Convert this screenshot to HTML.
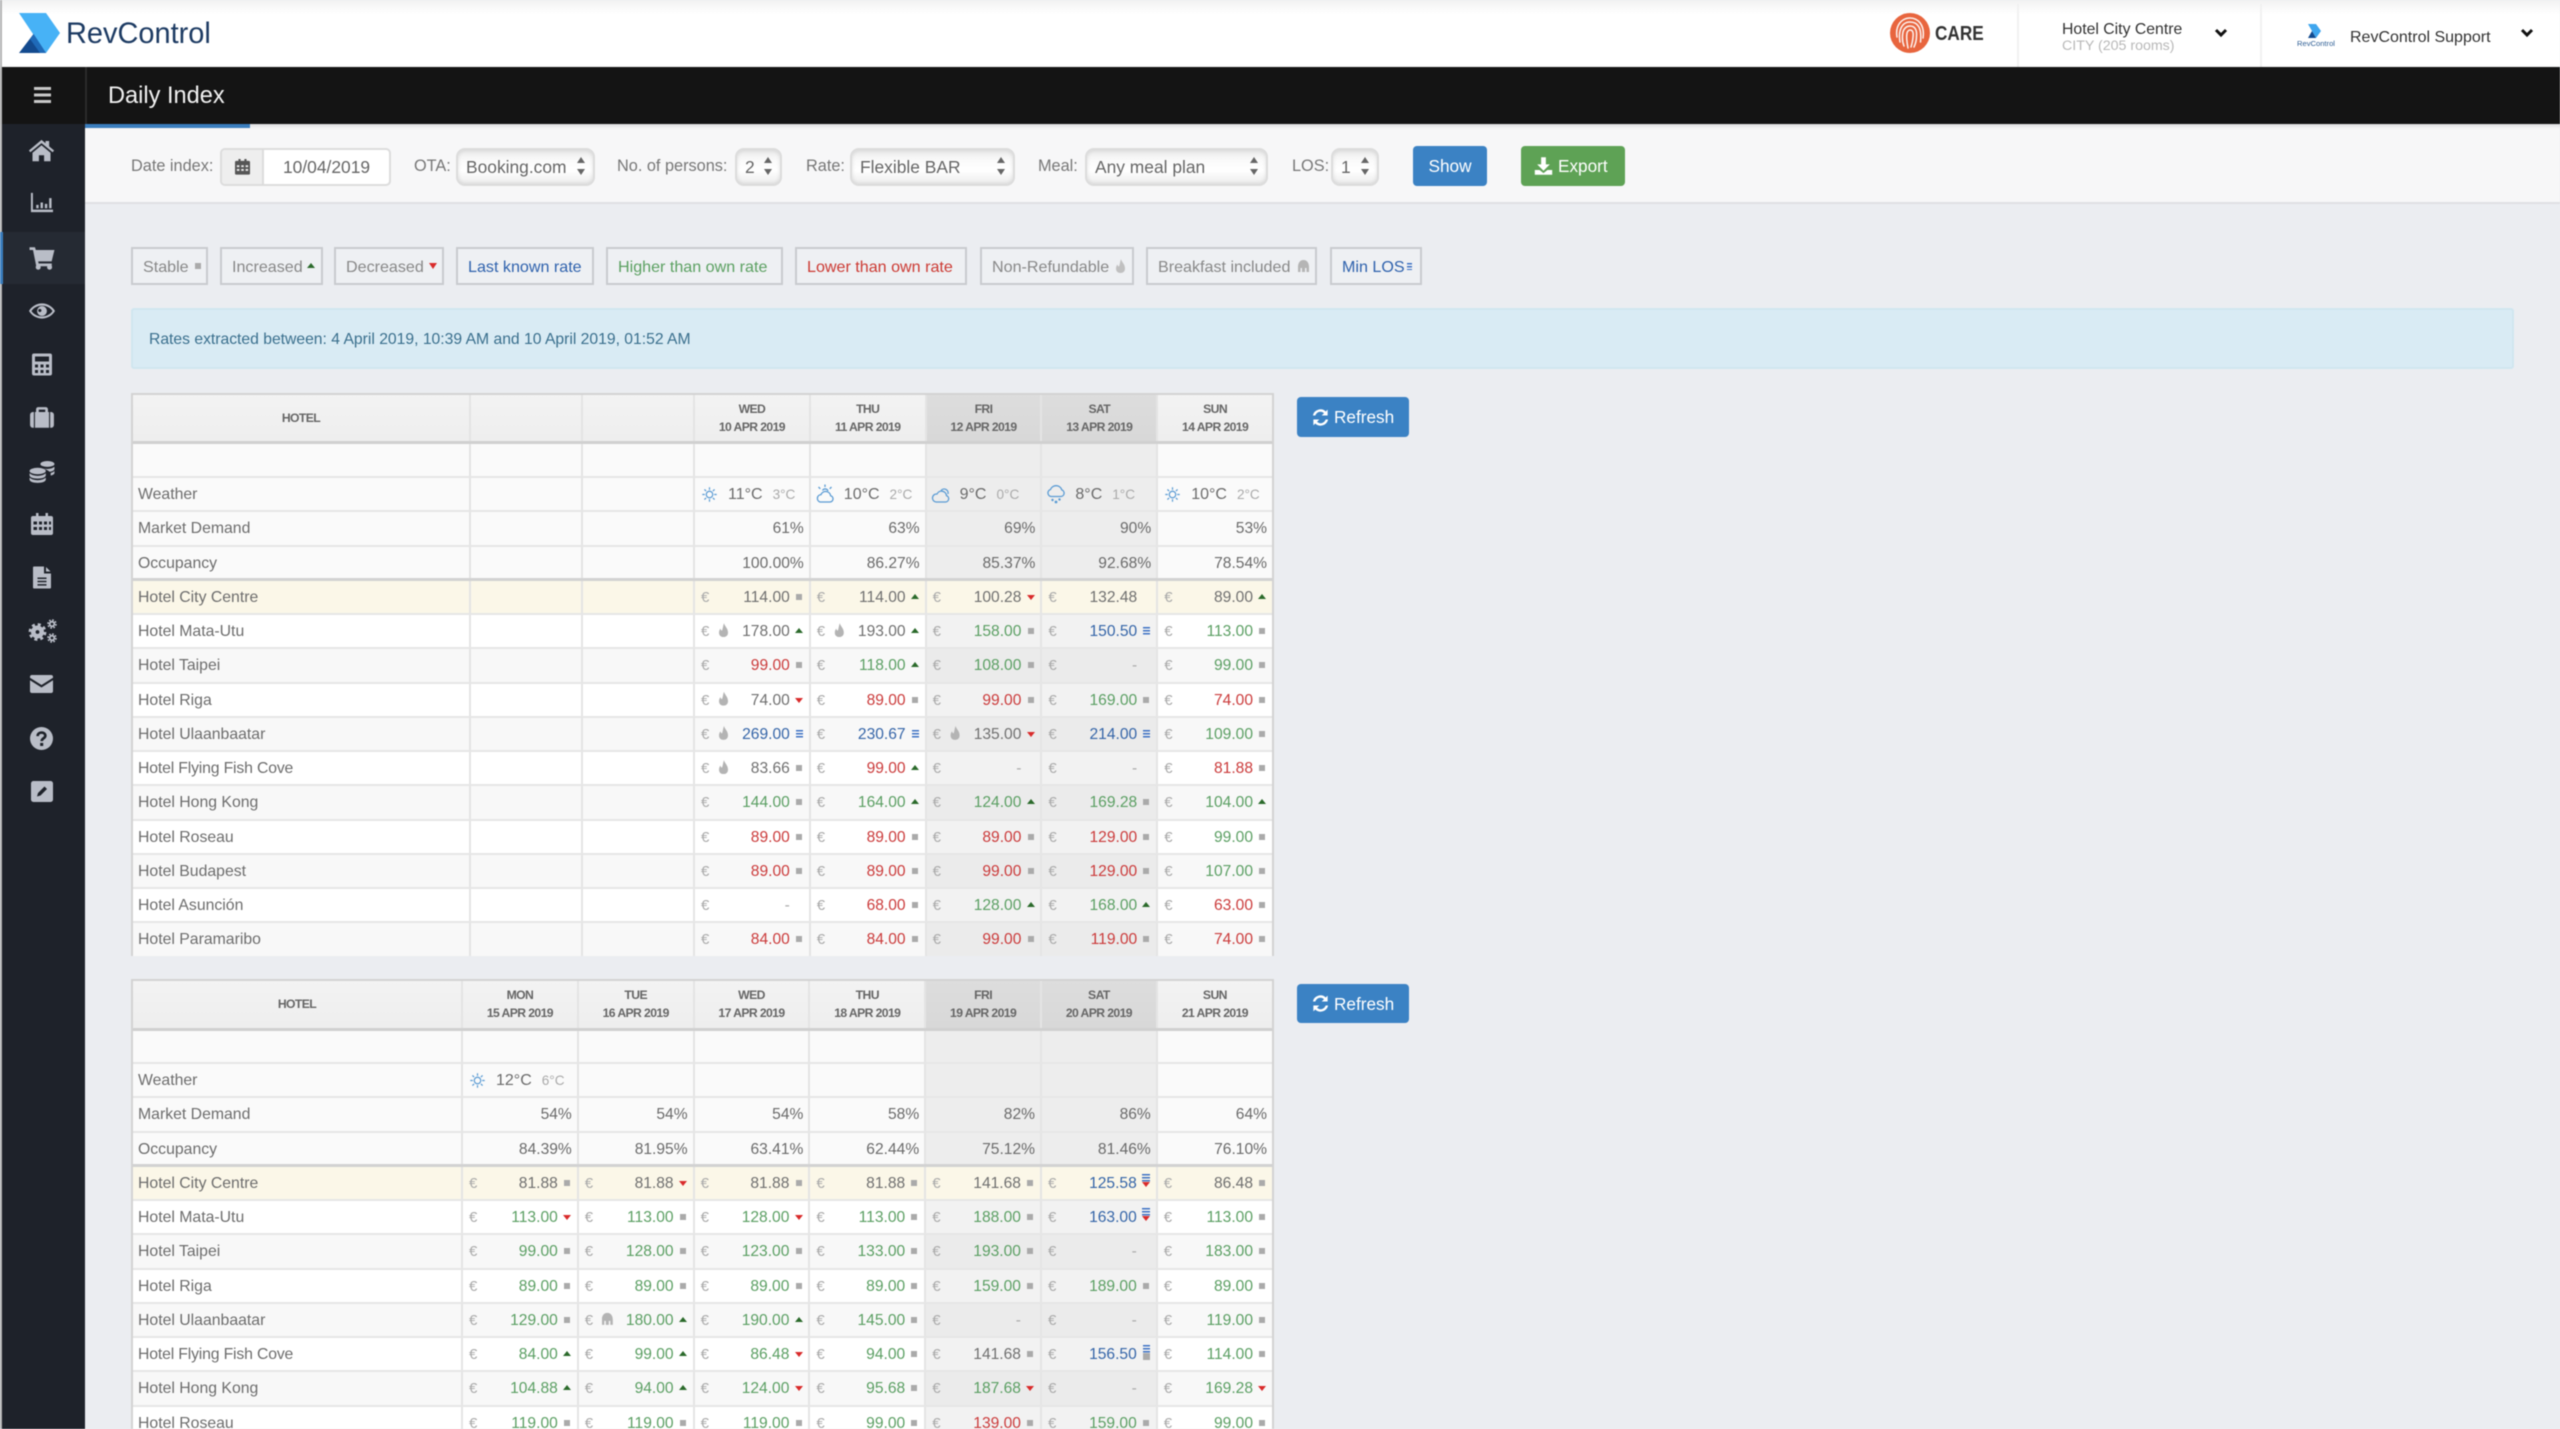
<!DOCTYPE html>
<html lang="en"><head><meta charset="utf-8"><title>Daily Index</title>
<style>
*{box-sizing:border-box}
html,body{margin:0;padding:0;width:2560px;height:1429px;overflow:hidden;background:#ebedf1;font-family:"Liberation Sans",sans-serif;color:#6b6b6b}
body{filter:blur(.4px)}
.a{position:absolute;white-space:nowrap}
svg{display:block;overflow:visible}
#top{position:absolute;left:0;top:0;width:2560px;height:67px;background:linear-gradient(#f2f2f2,#fff 14px)}
#bar{position:absolute;left:0;top:67px;width:2560px;height:57px;background:#141414;box-shadow:0 2px 4px rgba(0,0,0,.25)}
#side{position:absolute;left:0;top:124px;width:85px;height:1305px;background:#1e222a}
#tb{position:absolute;left:85px;top:124px;width:2475px;height:80px;background:#f7f7f8;border-bottom:2px solid #dfe0e3;box-shadow:inset 0 5px 4px -3px rgba(0,0,0,.12)}
.ic{position:absolute;color:#b9bdc7}
.lb{position:absolute;top:154px;font-size:16.3px;line-height:25px;color:#777;white-space:nowrap}
.sel{position:absolute;top:148px;height:38px;border:2px solid #dcdcdc;border-radius:9px;line-height:34px;padding-left:8px;font-size:17.4px;color:#666;background:linear-gradient(#e9e9e9,#fafafa 30%,#fff 60%,#ececec);box-shadow:inset 0 0 4px rgba(0,0,0,.12);white-space:nowrap}
.sel::before,.sel::after{content:"";position:absolute;right:8px;border-left:4px solid transparent;border-right:4px solid transparent}
.sel::before{top:7px;border-bottom:6px solid #666}
.sel::after{top:19px;border-top:6px solid #666}
.btn{position:absolute;border-radius:4px;color:#fff;font-size:17.2px;text-align:center;white-space:nowrap}
.tag{position:absolute;top:247px;height:38px;line-height:37px;border:2px solid #c9cbcf;font-size:16.1px;color:#888;padding-left:10px;white-space:nowrap;background:#eef0f3}
.tag u{position:absolute;text-decoration:none}
.t{position:absolute;left:131px;width:1143px;border:2px solid #d3d3d3;border-bottom-width:0;background:#fff;overflow:hidden}
.r{display:flex;height:34.28px;line-height:34px;border-bottom:2px solid #e6e6e6;font-size:15.6px}
.r>div{flex:none;position:relative;border-right:2px solid #e4e4e4;height:100%}
.n{padding-left:5px;font-size:15.8px;color:#6d6d6d;white-space:nowrap}
.t1 .n{width:338px}.t2 .n{width:330px}
.e{width:112px}
.c{width:115.8px}
.r>.c:last-child{border-right:0;flex:1}
.m{background:#fafafa}.z{background:#f8f8f8}.o{background:#fff}.y{background:#fbf7e8}
.w{background:rgba(0,0,0,.05)}
.y .w{background:none}
.h{height:49px;background:linear-gradient(#f3f3f3,#eeeeee);border-bottom:3px solid #d0d0d0;line-height:18px;font-size:12.2px;font-weight:bold;color:#666;text-align:center;letter-spacing:-.6px}
.h>div{padding-top:5px}
.h .n{padding:14px 0 0 0;font-size:12.2px;color:#666}
.h .w{background:rgba(0,0,0,.09)}
.bb{border-bottom:3px solid #d2d2d2}
.c i{position:absolute;left:6px;top:0;font-style:normal;color:#aaa;font-size:15px}
.c b{position:absolute;right:19px;top:0;font-weight:normal;color:#707070}
.c b.g{color:#5b9f63}.c b.d{color:#cb3b3b}.c b.l{color:#3565a8}
.c b.x{color:#aaa}
.c u{position:absolute;text-decoration:none;display:block}
.s{left:101px;top:13px;width:6px;height:6px;background:#aaa}
.up{left:100px;top:13px;border-left:4px solid transparent;border-right:4px solid transparent;border-bottom:5px solid #2b6a2b}
.dn{left:100px;top:14px;border-left:4px solid transparent;border-right:4px solid transparent;border-top:5px solid #d92b2b}
.k{left:101px;top:12px;width:7px;height:8px;background:repeating-linear-gradient(#3e72c4 0 1.5px,transparent 1.5px 3px)}
.kd{left:100px;top:7px;width:8px;height:8px;background:repeating-linear-gradient(#3e72c4 0 1.5px,transparent 1.5px 3px)}
.kd::after{content:"";position:absolute;left:0;top:8px;border-left:4px solid transparent;border-right:4px solid transparent;border-top:5px solid #d92b2b}
.ks{left:101px;top:7px;width:7px;height:8px;background:repeating-linear-gradient(#3e72c4 0 1.5px,transparent 1.5px 3px)}
.ks::after{content:"";position:absolute;left:0;top:8px;width:7px;height:7px;background:#aaa}
em{position:absolute;left:23px;top:8px;width:11px;height:14px;background:#b4b4b4;clip-path:path('M6 0C6.500 3 10 5 10 9.500 10 12.500 8 14 5.500 14 3 14 1 12.500 1 9.500 1 8 1.500 6.500 2.500 5.500 2.800 7 3.500 7.500 4 7.500 5 5 5 2.500 6 0z')}
em.br{clip-path:path('M5.5 1C9 1 11 4 11 8V13H8.5V9H7V13H4V9H2.5V13H0V8C0 4 2 1 5.5 1z')}
.p{text-align:right;padding-right:5px}
.wx svg{position:absolute;left:4px;top:6px;color:#5a9bd4}
.wx svg.su{left:6px;top:7.5px}
.wx span{position:absolute;left:33px;top:0;font-size:16px;white-space:nowrap}
.wx small{font-size:13.6px;color:#aaa;margin-left:10px}
</style></head><body>
<svg width="0" height="0" style="position:absolute"><defs>
<symbol id="sun" viewBox="0 0 20 20"><g fill="none" stroke="currentColor" stroke-width="1.4"><circle cx="10" cy="10" r="3.8"/><path d="M10 1.5v3M10 15.500v3M1.500 10h3M15.500 10h3M4 4l2 2M14 14l2 2M4 16l2-2M14 6l2-2"/></g></symbol>
<symbol id="sc" viewBox="0 0 20 20"><g fill="none" stroke="currentColor" stroke-width="1.3"><path d="M5 18h10a3.2 3.2 0 0 0 .6-6.3A5 5 0 0 0 6 10.6 3.8 3.8 0 0 0 5 18z"/><path d="M7.500 6.500a3 3 0 0 1 5.500 .5M10 .5v2.500M3.500 3l1.800 1.800M16.500 3l-1.800 1.800"/></g></symbol>
<symbol id="cl" viewBox="0 0 20 20"><g fill="none" stroke="currentColor" stroke-width="1.3"><path d="M5 18h9.500a3.300 3.300 0 0 0 1-6.400A5 5 0 0 0 6 10 4 4 0 0 0 5 18z"/><path d="M10 6.500a4 4 0 0 1 7 3.500"/></g></symbol>
<symbol id="rn" viewBox="0 0 20 20"><g fill="none" stroke="currentColor" stroke-width="1.3"><path d="M5 12.500h10a3.400 3.400 0 0 0 .8-6.600A6 6 0 0 0 4.500 5.500 3.600 3.600 0 0 0 5 12.500z"/></g><g fill="currentColor"><circle cx="6.500" cy="16" r="1.200"/><circle cx="10" cy="18" r="1.400"/><circle cx="13.500" cy="15.500" r="1.200"/></g></symbol>
<symbol id="rf" viewBox="0 0 24 24"><path fill="currentColor" d="M21 2v7.500h-7.500l2.900-2.900A6.600 6.600 0 0 0 5.500 9.400H2.400A9.700 9.700 0 0 1 18.600 4.400zM3 22v-7.500h7.500l-2.900 2.900a6.600 6.600 0 0 0 10.900-2.800h3.100A9.700 9.700 0 0 1 5.400 19.600z"/></symbol>
</defs></svg>

<div id="top"></div>
<svg class="a" style="left:0;top:0" width="70" height="67"><polygon points="19,13 46,13 60,33 46,53 33,34" fill="#47b2f6"/><polygon points="19,53 33.5,34 46,53" fill="#134a8e"/><polygon points="33.5,34 46,53 40,53 30,39" fill="#1f6ab8"/></svg>
<div class="a" style="left:66px;top:16px;font-size:30px;line-height:36px;color:#1d3b63;transform:scaleX(.965);transform-origin:left">RevControl</div>

<svg class="a" style="left:1890px;top:13px" width="40" height="40" viewBox="0 0 40 40"><ellipse cx="20" cy="20" rx="20" ry="20" fill="#e8653e"/><g fill="none" stroke="#fff" stroke-width="1.5" stroke-linecap="round" opacity=".92"><path d="M7 24C5 12 12 5 20 5s15 7 13 20"/><path d="M10 29C8 17 12 9 20 9s12 6 10.500 20"/><path d="M14 33c-2-5-2-9-1-14 1-4 4-6 7-6 5 0 7 4 6.500 10 0 4-1 8-2.500 11"/><path d="M18 35c-1-5-2-10-1-15 .5-2 2-3 3-3 3 0 3.500 3 3 7-.2 3-.8 6-2 10"/></g></svg>
<div class="a" style="left:1935px;top:20px;font-size:20px;line-height:28px;font-weight:bold;color:#333;transform:scaleX(.86);transform-origin:left">CARE</div>
<div class="a" style="left:2017px;top:4px;width:2px;height:63px;background:#f1f1f1"></div>
<div class="a" style="left:2260px;top:4px;width:2px;height:63px;background:#f1f1f1"></div>
<div class="a" style="left:2062px;top:19px;font-size:15.800px;line-height:22px;color:#333">Hotel City Centre</div>
<div class="a" style="left:2062px;top:36px;font-size:14.200px;line-height:20px;color:#b8b8b8">CITY (205 rooms)</div>
<svg class="a" style="left:2214px;top:28px" width="14" height="10" viewBox="0 0 14 10"><path d="M2 2l5 5 5-5" fill="none" stroke="#111" stroke-width="3"/></svg>
<svg class="a" style="left:2305px;top:24px" width="18" height="15" viewBox="0 0 18 15"><polygon points="3,0 11,0 16,7 11,14 7,7" fill="#3fa6ee"/><polygon points="3,14 7,7 11,14" fill="#134a8e"/></svg>
<div class="a" style="left:2297px;top:39px;font-size:7.600px;line-height:10px;color:#2f5f95">RevControl</div>
<div class="a" style="left:2350px;top:26px;font-size:16px;line-height:24px;color:#333">RevControl Support</div>
<svg class="a" style="left:2520px;top:28px" width="14" height="10" viewBox="0 0 14 10"><path d="M2 2l5 5 5-5" fill="none" stroke="#111" stroke-width="3"/></svg>

<div id="bar"></div>
<div class="a" style="left:108px;top:80px;font-size:23.600px;line-height:32px;color:#f2f2f2">Daily Index</div>
<div class="a" style="left:85px;top:67px;width:2px;height:57px;background:#2a2a2a"></div>
<svg class="a" style="left:34px;top:87px" width="17" height="16"><path d="M0 1.500h17M0 8h17M0 14.500h17" stroke="#c8c8c8" stroke-width="3"/></svg>

<div id="side"></div>
<div id="tb"></div>
<div class="a" style="left:85px;top:124px;width:165px;height:4px;background:#3a7dbd"></div>
<div class="a" style="left:0;top:0;width:2px;height:1429px;background:#b5b5b5"></div>
<div class="a" style="left:2px;top:232px;width:83px;height:52px;background:#252a33"></div>
<div class="a" style="left:0;top:232px;width:3px;height:52px;background:#3a7dbd"></div>

<!-- sidebar icons -->
<svg class="ic" style="left:28px;top:137px" width="27" height="27" viewBox="0 0 24 24" fill="currentColor"><path d="M12 2.500L.8 12l1.300 1.600L12 5.400l9.900 8.200 1.300-1.600-4.400-3.700V3.500h-3.200v2.100z"/><path d="M12 7.300L4 14v7.500h5.700v-5.300h4.600v5.300H20V14z"/></svg>
<svg class="ic" style="left:30px;top:190px" width="23" height="24" viewBox="0 0 24 24" fill="currentColor"><path d="M1 2.500h2V20h21v2.500H1z"/><path d="M6.500 15h2.500v3.500H6.500zM11 12.500h2.500v6H11zM15.500 14h2.500v4.500h-2.500zM20 8h2.500v10.500H20z"/></svg>
<svg class="ic" style="left:29px;top:244px" width="26" height="26" viewBox="0 0 24 24" fill="currentColor"><path d="M.5 3h5l.8 2.500H23.500l-2.600 10.500H8.500l.4 2H21v2.500H6.700L3.700 5.500H.5z"/><circle cx="8.500" cy="21.500" r="2.300"/><circle cx="19" cy="21.500" r="2.300"/></svg>
<svg class="ic" style="left:29px;top:298px" width="26" height="26" viewBox="0 0 24 24" fill="currentColor" fill-rule="evenodd"><path d="M12 5C6.500 5 2 8.500 0 12c2 3.500 6.500 7 12 7s10-3.500 12-7c-2-3.500-6.500-7-12-7zm0 2c4.500 0 8 2.300 9.700 5-1.700 2.700-5.200 5-9.700 5s-8-2.300-9.700-5C4 9.300 7.500 7 12 7z"/><path d="M12 7.500a4.500 4.500 0 1 1-.01 0zM10 10a1.500 1.500 0 1 0 .01 0z"/></svg>
<svg class="ic" style="left:30px;top:352px" width="24" height="25" viewBox="0 0 24 24" fill="currentColor" fill-rule="evenodd"><path d="M4 1h16a2 2 0 0 1 2 2v18a2 2 0 0 1-2 2H4a2 2 0 0 1-2-2V3a2 2 0 0 1 2-2zm1 3v5h14V4zM5 12v3h3v-3zm5.500 0v3h3v-3zm5.500 0v3h3v-3zM5 17.500v3h3v-3zm5.500 0v3h3v-3zm5.500 0v3h3v-3z"/></svg>
<svg class="ic" style="left:29px;top:405px" width="26" height="26" viewBox="0 0 24 24" fill="currentColor"><path d="M1 9a2.500 2.500 0 0 1 2.500-2.500H4.500V21H3.500A2.500 2.500 0 0 1 1 18.500zM6.500 6.500V4a2 2 0 0 1 2-2h7a2 2 0 0 1 2 2v2.500h1V21H5.500V6.500zM9 6.500h6V4.300H9zM19.500 6.500h1A2.500 2.500 0 0 1 23 9v9.500a2.500 2.500 0 0 1-2.500 2.500h-1z"/></svg>
<svg class="ic" style="left:29px;top:458px" width="26" height="26" viewBox="0 0 24 24" fill="currentColor"><ellipse cx="17" cy="5.500" rx="6.500" ry="2.700"/><path d="M12.500 9.300c1.300.5 3 .8 4.500.8 2.800 0 5-.8 6.500-2V10c0 1.300-2 2.400-4.500 2.700-1.300-1.400-4-2.600-6.500-3.400zM20 13.800c1.700-.4 3-1 3.500-2v2c0 .9-1.300 1.900-3.500 2.400z"/><ellipse cx="8" cy="12" rx="7.500" ry="3"/><path d="M.5 14c1.500 1.500 4.300 2.500 7.500 2.500s6-1 7.500-2.500v2c0 1.700-3.400 3-7.500 3s-7.500-1.300-7.500-3zM.5 18c1.500 1.500 4.300 2.500 7.500 2.500s6-1 7.500-2.500v2c0 1.700-3.400 3-7.500 3s-7.500-1.300-7.500-3z"/></svg>
<svg class="ic" style="left:30px;top:512px" width="24" height="24" viewBox="0 0 24 24" fill="currentColor" fill-rule="evenodd"><path d="M6 1h2.500v3h7V1H18v3h3a2 2 0 0 1 2 2v15a2 2 0 0 1-2 2H3a2 2 0 0 1-2-2V6a2 2 0 0 1 2-2h3zM3.500 9.500v3h3.500v-3zm5.500 0v3h3v-3zm5 0v3h3v-3zm5 0v3h2v-3zM3.500 15v3h3.500v-3zm5.500 0v3h3v-3zm5 0v3h3v-3zm5 0v3h2v-3z"/></svg>
<svg class="ic" style="left:30px;top:565px" width="24" height="25" viewBox="0 0 24 24" fill="currentColor" fill-rule="evenodd"><path d="M4 1h10v7h7v14a1 1 0 0 1-1 1H4a1 1 0 0 1-1-1V2a1 1 0 0 1 1-1zm3.500 11v1.500h9V12zm0 3.300v1.500h9v-1.500zm0 3.300v1.500h9v-1.500z"/><path d="M16 1.500 20.500 6H16z"/></svg>
<svg class="ic" style="left:27px;top:618px" width="30" height="26" viewBox="0 0 30 26"><g fill="none" stroke="currentColor"><circle cx="10.500" cy="14" r="4.200" stroke-width="4.600"/><circle cx="10.500" cy="14" r="7.400" stroke-width="3" stroke-dasharray="3 2.810"/><circle cx="25" cy="6" r="2.300" stroke-width="1.800"/><circle cx="25" cy="6" r="4" stroke-width="1.600" stroke-dasharray="1.700 1.440"/><circle cx="25" cy="20" r="2.300" stroke-width="1.800"/><circle cx="25" cy="20" r="4" stroke-width="1.600" stroke-dasharray="1.700 1.440"/></g></svg>
<svg class="ic" style="left:30px;top:674px" width="23" height="20" viewBox="0 0 23 20" fill="currentColor"><path d="M2 1h19a2 2 0 0 1 2 2v.8L11.500 11 0 3.800V3a2 2 0 0 1 2-2z"/><path d="M0 6.300l11.500 7.200L23 6.300V17a2 2 0 0 1-2 2H2a2 2 0 0 1-2-2z"/></svg>
<svg class="ic" style="left:30px;top:727px" width="23" height="23" viewBox="0 0 24 24"><circle cx="12" cy="12" r="12" fill="currentColor"/><path d="M8 9.500c0-2.300 1.800-3.700 4-3.700s4 1.400 4 3.300c0 2.700-3.800 2.800-3.800 5.600" fill="none" stroke="#1e222a" stroke-width="2.800"/><rect x="10.600" y="16.600" width="3.200" height="3.200" fill="#1e222a"/></svg>
<svg class="ic" style="left:31px;top:781px" width="22" height="21" viewBox="0 0 22 21"><rect width="22" height="21" rx="2.500" fill="currentColor"/><path d="M6 15.500l1-3.500 6.500-6.500 2.500 2.500-6.500 6.500z" fill="#1e222a"/></svg>

<!-- toolbar -->
<div class="lb" style="left:131px">Date index:</div>
<div class="a" style="left:220px;top:148px;width:171px;height:38px;border:2px solid #dcdcdc;border-radius:5px;background:#fff;line-height:35px;font-size:17.400px;color:#666;padding-left:61px">10/04/2019</div>
<div class="a" style="left:222px;top:150px;width:42px;height:34px;background:#eeeeee;border-right:2px solid #dcdcdc;border-radius:3px 0 0 3px"></div>
<svg class="a" style="left:235px;top:157px;color:#555" width="15" height="19" viewBox="0 0 24 26" fill="currentColor" fill-rule="evenodd"><path d="M5.500 1H9v3h6V1h3.500v3H22a2 2 0 0 1 2 2v18a2 2 0 0 1-2 2H2a2 2 0 0 1-2-2V6a2 2 0 0 1 2-2h3.500zM3 11v3h4v-3zm7 0v3h4v-3zm7 0v3h4v-3zM3 17v3h4v-3zm7 0v3h4v-3zm7 0v3h4v-3z"/></svg>
<div class="lb" style="left:414px">OTA:</div>
<div class="sel" style="left:456px;width:139px">Booking.com</div>
<div class="lb" style="left:617px">No. of persons:</div>
<div class="sel" style="left:735px;width:47px">2</div>
<div class="lb" style="left:806px">Rate:</div>
<div class="sel" style="left:850px;width:165px">Flexible BAR</div>
<div class="lb" style="left:1038px">Meal:</div>
<div class="sel" style="left:1085px;width:183px">Any meal plan</div>
<div class="lb" style="left:1292px">LOS:</div>
<div class="sel" style="left:1331px;width:48px">1</div>
<div class="btn" style="left:1413px;top:146px;width:74px;height:40px;line-height:40px;background:#3b82c4">Show</div>
<div class="btn" style="left:1521px;top:146px;width:104px;height:40px;line-height:40px;background:#5ea255;padding-left:37px;text-align:left">Export</div>
<svg class="a" style="left:1534px;top:156px;color:#fff" width="19" height="20" viewBox="0 0 24 24" fill="currentColor"><path d="M9 1h6v9h5l-8 8-8-8h5z"/><path d="M1 17h6l5 4 5-4h6v6H1z"/></svg>

<!-- legend -->
<div class="tag" style="left:131px;width:77px">Stable<u style="left:62px;top:14px;width:6px;height:6px;background:#aaa"></u></div>
<div class="tag" style="left:220px;width:103px">Increased<u style="left:85px;top:14px;border-left:4.500px solid transparent;border-right:4.500px solid transparent;border-bottom:5px solid #2b6a2b"></u></div>
<div class="tag" style="left:334px;width:110px">Decreased<u style="left:93px;top:14px;border-left:4.500px solid transparent;border-right:4.500px solid transparent;border-top:6px solid #d92b2b"></u></div>
<div class="tag" style="left:456px;width:138px;color:#2f62ad">Last known rate</div>
<div class="tag" style="left:606px;width:177px;color:#5ba061">Higher than own rate</div>
<div class="tag" style="left:795px;width:172px;color:#cc3a33">Lower than own rate</div>
<div class="tag" style="left:980px;width:154px">Non-Refundable<em style="left:133px;top:10px;width:10px;height:14px;background:#c0c0c0"></em></div>
<div class="tag" style="left:1146px;width:171px">Breakfast included<em class="br" style="left:150px;top:10px;background:#b5b5b5"></em></div>
<div class="tag" style="left:1330px;width:92px;color:#2f62ad">Min LOS<u style="left:75px;top:14px;width:5px;height:7px;background:repeating-linear-gradient(#3e72c4 0 1.500px,transparent 1.500px 3px)"></u></div>

<!-- alert -->
<div class="a" style="left:131px;top:308px;width:2383px;height:61px;background:#d9ebf4;border:2px solid #d0e6f0;border-radius:3px;line-height:59px;padding-left:16px;font-size:15.700px;color:#3a6f8d">Rates extracted between: 4 April 2019, 10:39 AM and 10 April 2019, 01:52 AM</div>

<!-- TABLE 1 -->
<div class="t t1" style="top:393px;height:563px">
<div class="r h"><div class="n">HOTEL</div><div class="e"></div><div class="e"></div><div class="c">WED<br>10 APR 2019</div><div class="c">THU<br>11 APR 2019</div><div class="c w">FRI<br>12 APR 2019</div><div class="c w">SAT<br>13 APR 2019</div><div class="c">SUN<br>14 APR 2019</div></div>
<div class="r m" style="height:34px"><div class="n"></div><div class="e"></div><div class="e"></div><div class="c"></div><div class="c"></div><div class="c w"></div><div class="c w"></div><div class="c"></div></div>
<div class="r m"><div class="n">Weather</div><div class="e"></div><div class="e"></div>
<div class="c wx"><svg class="su" width="17" height="17"><use href="#sun"/></svg><span>11°C<small>3°C</small></span></div>
<div class="c wx"><svg width="20" height="20"><use href="#sc"/></svg><span>10°C<small>2°C</small></span></div>
<div class="c w wx"><svg width="20" height="20"><use href="#cl"/></svg><span>9°C<small>0°C</small></span></div>
<div class="c w wx"><svg width="20" height="20"><use href="#rn"/></svg><span>8°C<small>1°C</small></span></div>
<div class="c wx"><svg class="su" width="17" height="17"><use href="#sun"/></svg><span>10°C<small>2°C</small></span></div></div>
<div class="r m"><div class="n">Market Demand</div><div class="e"></div><div class="e"></div><div class="c p">61%</div><div class="c p">63%</div><div class="c w p">69%</div><div class="c w p">90%</div><div class="c p">53%</div></div>
<div class="r m bb"><div class="n">Occupancy</div><div class="e"></div><div class="e"></div><div class="c p">100.00%</div><div class="c p">86.27%</div><div class="c w p">85.37%</div><div class="c w p">92.68%</div><div class="c p">78.54%</div></div>
<div class="r y"><div class="n">Hotel City Centre</div><div class="e"></div><div class="e"></div>
<div class="c"><i>€</i><b>114.00</b><u class="s"></u></div><div class="c"><i>€</i><b>114.00</b><u class="up"></u></div><div class="c w"><i>€</i><b>100.28</b><u class="dn"></u></div><div class="c w"><i>€</i><b>132.48</b></div><div class="c"><i>€</i><b>89.00</b><u class="up"></u></div></div>
<div class="r o"><div class="n">Hotel Mata-Utu</div><div class="e"></div><div class="e"></div>
<div class="c"><i>€</i><em></em><b>178.00</b><u class="up"></u></div><div class="c"><i>€</i><em></em><b>193.00</b><u class="up"></u></div><div class="c w"><i>€</i><b class="g">158.00</b><u class="s"></u></div><div class="c w"><i>€</i><b class="l">150.50</b><u class="k"></u></div><div class="c"><i>€</i><b class="g">113.00</b><u class="s"></u></div></div>
<div class="r z"><div class="n">Hotel Taipei</div><div class="e"></div><div class="e"></div>
<div class="c"><i>€</i><b class="d">99.00</b><u class="s"></u></div><div class="c"><i>€</i><b class="g">118.00</b><u class="up"></u></div><div class="c w"><i>€</i><b class="g">108.00</b><u class="s"></u></div><div class="c w"><i>€</i><b class="x">-</b></div><div class="c"><i>€</i><b class="g">99.00</b><u class="s"></u></div></div>
<div class="r o"><div class="n">Hotel Riga</div><div class="e"></div><div class="e"></div>
<div class="c"><i>€</i><em></em><b>74.00</b><u class="dn"></u></div><div class="c"><i>€</i><b class="d">89.00</b><u class="s"></u></div><div class="c w"><i>€</i><b class="d">99.00</b><u class="s"></u></div><div class="c w"><i>€</i><b class="g">169.00</b><u class="s"></u></div><div class="c"><i>€</i><b class="d">74.00</b><u class="s"></u></div></div>
<div class="r z"><div class="n">Hotel Ulaanbaatar</div><div class="e"></div><div class="e"></div>
<div class="c"><i>€</i><em></em><b class="l">269.00</b><u class="k"></u></div><div class="c"><i>€</i><b class="l">230.67</b><u class="k"></u></div><div class="c w"><i>€</i><em></em><b>135.00</b><u class="dn"></u></div><div class="c w"><i>€</i><b class="l">214.00</b><u class="k"></u></div><div class="c"><i>€</i><b class="g">109.00</b><u class="s"></u></div></div>
<div class="r o"><div class="n" style="letter-spacing:-.17px">Hotel Flying Fish Cove</div><div class="e"></div><div class="e"></div>
<div class="c"><i>€</i><em></em><b>83.66</b><u class="s"></u></div><div class="c"><i>€</i><b class="d">99.00</b><u class="up"></u></div><div class="c w"><i>€</i><b class="x">-</b></div><div class="c w"><i>€</i><b class="x">-</b></div><div class="c"><i>€</i><b class="d">81.88</b><u class="s"></u></div></div>
<div class="r z"><div class="n">Hotel Hong Kong</div><div class="e"></div><div class="e"></div>
<div class="c"><i>€</i><b class="g">144.00</b><u class="s"></u></div><div class="c"><i>€</i><b class="g">164.00</b><u class="up"></u></div><div class="c w"><i>€</i><b class="g">124.00</b><u class="up"></u></div><div class="c w"><i>€</i><b class="g">169.28</b><u class="s"></u></div><div class="c"><i>€</i><b class="g">104.00</b><u class="up"></u></div></div>
<div class="r o"><div class="n">Hotel Roseau</div><div class="e"></div><div class="e"></div>
<div class="c"><i>€</i><b class="d">89.00</b><u class="s"></u></div><div class="c"><i>€</i><b class="d">89.00</b><u class="s"></u></div><div class="c w"><i>€</i><b class="d">89.00</b><u class="s"></u></div><div class="c w"><i>€</i><b class="d">129.00</b><u class="s"></u></div><div class="c"><i>€</i><b class="g">99.00</b><u class="s"></u></div></div>
<div class="r z"><div class="n">Hotel Budapest</div><div class="e"></div><div class="e"></div>
<div class="c"><i>€</i><b class="d">89.00</b><u class="s"></u></div><div class="c"><i>€</i><b class="d">89.00</b><u class="s"></u></div><div class="c w"><i>€</i><b class="d">99.00</b><u class="s"></u></div><div class="c w"><i>€</i><b class="d">129.00</b><u class="s"></u></div><div class="c"><i>€</i><b class="g">107.00</b><u class="s"></u></div></div>
<div class="r o"><div class="n">Hotel Asunción</div><div class="e"></div><div class="e"></div>
<div class="c"><i>€</i><b class="x">-</b></div><div class="c"><i>€</i><b class="d">68.00</b><u class="s"></u></div><div class="c w"><i>€</i><b class="g">128.00</b><u class="up"></u></div><div class="c w"><i>€</i><b class="g">168.00</b><u class="up"></u></div><div class="c"><i>€</i><b class="d">63.00</b><u class="s"></u></div></div>
<div class="r z"><div class="n">Hotel Paramaribo</div><div class="e"></div><div class="e"></div>
<div class="c"><i>€</i><b class="d">84.00</b><u class="s"></u></div><div class="c"><i>€</i><b class="d">84.00</b><u class="s"></u></div><div class="c w"><i>€</i><b class="d">99.00</b><u class="s"></u></div><div class="c w"><i>€</i><b class="d">119.00</b><u class="s"></u></div><div class="c"><i>€</i><b class="d">74.00</b><u class="s"></u></div></div>
</div>
<div class="btn" style="left:1297px;top:397px;width:112px;height:40px;line-height:41px;background:#3b82c4;padding-left:37px;text-align:left">Refresh</div>
<svg class="a" style="left:1311px;top:408px;color:#fff" width="19" height="19"><use href="#rf"/></svg>

<!-- TABLE 2 -->
<div class="t t2" style="top:979px;height:450px">
<div class="r h" style="height:50px"><div class="n">HOTEL</div><div class="c">MON<br>15 APR 2019</div><div class="c">TUE<br>16 APR 2019</div><div class="c">WED<br>17 APR 2019</div><div class="c">THU<br>18 APR 2019</div><div class="c w">FRI<br>19 APR 2019</div><div class="c w">SAT<br>20 APR 2019</div><div class="c">SUN<br>21 APR 2019</div></div>
<div class="r m" style="height:33px"><div class="n"></div><div class="c"></div><div class="c"></div><div class="c"></div><div class="c"></div><div class="c w"></div><div class="c w"></div><div class="c"></div></div>
<div class="r m"><div class="n">Weather</div><div class="c wx"><svg class="su" width="17" height="17"><use href="#sun"/></svg><span>12°C<small>6°C</small></span></div><div class="c"></div><div class="c"></div><div class="c"></div><div class="c w"></div><div class="c w"></div><div class="c"></div></div>
<div class="r m"><div class="n">Market Demand</div><div class="c p">54%</div><div class="c p">54%</div><div class="c p">54%</div><div class="c p">58%</div><div class="c w p">82%</div><div class="c w p">86%</div><div class="c p">64%</div></div>
<div class="r m bb"><div class="n">Occupancy</div><div class="c p">84.39%</div><div class="c p">81.95%</div><div class="c p">63.41%</div><div class="c p">62.44%</div><div class="c w p">75.12%</div><div class="c w p">81.46%</div><div class="c p">76.10%</div></div>
<div class="r y"><div class="n">Hotel City Centre</div>
<div class="c"><i>€</i><b>81.88</b><u class="s"></u></div><div class="c"><i>€</i><b>81.88</b><u class="dn"></u></div><div class="c"><i>€</i><b>81.88</b><u class="s"></u></div><div class="c"><i>€</i><b>81.88</b><u class="s"></u></div><div class="c w"><i>€</i><b>141.68</b><u class="s"></u></div><div class="c w"><i>€</i><b class="l">125.58</b><u class="kd"></u></div><div class="c"><i>€</i><b>86.48</b><u class="s"></u></div></div>
<div class="r o"><div class="n">Hotel Mata-Utu</div>
<div class="c"><i>€</i><b class="g">113.00</b><u class="dn"></u></div><div class="c"><i>€</i><b class="g">113.00</b><u class="s"></u></div><div class="c"><i>€</i><b class="g">128.00</b><u class="dn"></u></div><div class="c"><i>€</i><b class="g">113.00</b><u class="s"></u></div><div class="c w"><i>€</i><b class="g">188.00</b><u class="s"></u></div><div class="c w"><i>€</i><b class="l">163.00</b><u class="kd"></u></div><div class="c"><i>€</i><b class="g">113.00</b><u class="s"></u></div></div>
<div class="r z"><div class="n">Hotel Taipei</div>
<div class="c"><i>€</i><b class="g">99.00</b><u class="s"></u></div><div class="c"><i>€</i><b class="g">128.00</b><u class="s"></u></div><div class="c"><i>€</i><b class="g">123.00</b><u class="s"></u></div><div class="c"><i>€</i><b class="g">133.00</b><u class="s"></u></div><div class="c w"><i>€</i><b class="g">193.00</b><u class="s"></u></div><div class="c w"><i>€</i><b class="x">-</b></div><div class="c"><i>€</i><b class="g">183.00</b><u class="s"></u></div></div>
<div class="r o"><div class="n">Hotel Riga</div>
<div class="c"><i>€</i><b class="g">89.00</b><u class="s"></u></div><div class="c"><i>€</i><b class="g">89.00</b><u class="s"></u></div><div class="c"><i>€</i><b class="g">89.00</b><u class="s"></u></div><div class="c"><i>€</i><b class="g">89.00</b><u class="s"></u></div><div class="c w"><i>€</i><b class="g">159.00</b><u class="s"></u></div><div class="c w"><i>€</i><b class="g">189.00</b><u class="s"></u></div><div class="c"><i>€</i><b class="g">89.00</b><u class="s"></u></div></div>
<div class="r z"><div class="n">Hotel Ulaanbaatar</div>
<div class="c"><i>€</i><b class="g">129.00</b><u class="s"></u></div><div class="c"><i>€</i><em class="br"></em><b class="g">180.00</b><u class="up"></u></div><div class="c"><i>€</i><b class="g">190.00</b><u class="up"></u></div><div class="c"><i>€</i><b class="g">145.00</b><u class="s"></u></div><div class="c w"><i>€</i><b class="x">-</b></div><div class="c w"><i>€</i><b class="x">-</b></div><div class="c"><i>€</i><b class="g">119.00</b><u class="s"></u></div></div>
<div class="r o"><div class="n" style="letter-spacing:-.17px">Hotel Flying Fish Cove</div>
<div class="c"><i>€</i><b class="g">84.00</b><u class="up"></u></div><div class="c"><i>€</i><b class="g">99.00</b><u class="up"></u></div><div class="c"><i>€</i><b class="g">86.48</b><u class="dn"></u></div><div class="c"><i>€</i><b class="g">94.00</b><u class="s"></u></div><div class="c w"><i>€</i><b>141.68</b><u class="s"></u></div><div class="c w"><i>€</i><b class="l">156.50</b><u class="ks"></u></div><div class="c"><i>€</i><b class="g">114.00</b><u class="s"></u></div></div>
<div class="r z"><div class="n">Hotel Hong Kong</div>
<div class="c"><i>€</i><b class="g">104.88</b><u class="up"></u></div><div class="c"><i>€</i><b class="g">94.00</b><u class="up"></u></div><div class="c"><i>€</i><b class="g">124.00</b><u class="dn"></u></div><div class="c"><i>€</i><b class="g">95.68</b><u class="s"></u></div><div class="c w"><i>€</i><b class="g">187.68</b><u class="dn"></u></div><div class="c w"><i>€</i><b class="x">-</b></div><div class="c"><i>€</i><b class="g">169.28</b><u class="dn"></u></div></div>
<div class="r o"><div class="n">Hotel Roseau</div>
<div class="c"><i>€</i><b class="g">119.00</b><u class="s"></u></div><div class="c"><i>€</i><b class="g">119.00</b><u class="s"></u></div><div class="c"><i>€</i><b class="g">119.00</b><u class="s"></u></div><div class="c"><i>€</i><b class="g">99.00</b><u class="s"></u></div><div class="c w"><i>€</i><b class="d">139.00</b><u class="s"></u></div><div class="c w"><i>€</i><b class="g">159.00</b><u class="s"></u></div><div class="c"><i>€</i><b class="g">99.00</b><u class="s"></u></div></div>
</div>
<div class="btn" style="left:1297px;top:984px;width:112px;height:39px;line-height:40px;background:#3b82c4;padding-left:37px;text-align:left">Refresh</div>
<svg class="a" style="left:1311px;top:994px;color:#fff" width="19" height="19"><use href="#rf"/></svg>
</body></html>
